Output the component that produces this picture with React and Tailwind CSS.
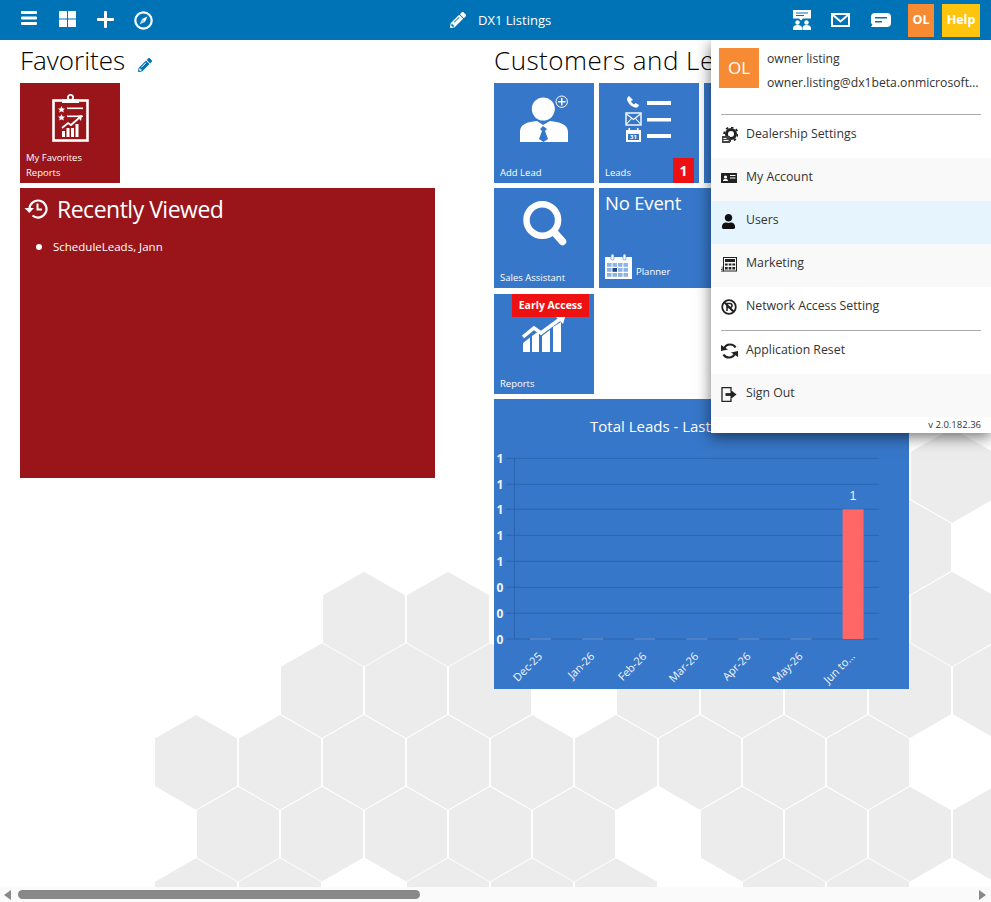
import React from "react";
import { FaPencilAlt, FaUser } from "react-icons/fa";

const hexRows = [
  { top: 428.3, xs: [952] },
  { top: 500, xs: [910] },
  { top: 571.7, xs: [364, 448, 952] },
  { top: 643.3, xs: [322, 406, 490, 658, 742, 826, 910, 994] },
  { top: 715, xs: [196, 280, 364, 448, 532, 616, 700, 784, 868] },
  { top: 786.7, xs: [238, 322, 406, 490, 574, 742, 826, 910, 994] },
  { top: 858.3, xs: [196, 280, 448, 532, 616, 784, 868] },
];

function HexBackground() {
  return (
    <svg className="absolute top-0 left-0" width="991" height="887">
      {hexRows.map((row) =>
        row.xs.map((x) => (
          <polygon
            key={row.top + "-" + x}
            fill="#ececec"
            points={`${x},${row.top} ${x + 41},${row.top + 23.5} ${x + 41},${row.top + 71} ${x},${row.top + 94.7} ${x - 41},${row.top + 71} ${x - 41},${row.top + 23.5}`}
          />
        ))
      )}
    </svg>
  );
}

function TopBar() {
  return (
    <header className="relative z-30 flex h-10 shrink-0 items-center bg-[#0073b7] text-white">
      <div className="flex w-[450px] pl-[10px]">
        <div className="flex w-[38px] justify-center">
          <svg width="16" height="14" viewBox="0 0 16 14" fill="white">
            <rect y="0" width="16" height="3" rx="1" />
            <rect y="5.5" width="16" height="3" rx="1" />
            <rect y="11" width="16" height="3" rx="1" />
          </svg>
        </div>
        <div className="flex w-[38px] justify-center">
          <svg width="17" height="16" viewBox="0 0 17 16" fill="white">
            <rect width="8" height="7.5" rx="0.5" />
            <rect x="9" width="8" height="7.5" rx="0.5" />
            <rect y="8.5" width="8" height="7.5" rx="0.5" />
            <rect x="9" y="8.5" width="8" height="7.5" rx="0.5" />
          </svg>
        </div>
        <div className="flex w-[38px] justify-center">
          <svg width="17" height="17" viewBox="0 0 17 17" fill="white">
            <rect x="7" width="3" height="17" rx="1" />
            <rect y="7" width="17" height="3" rx="1" />
          </svg>
        </div>
        <div className="flex w-[38px] justify-center">
          <svg width="19" height="19" viewBox="0 0 19 19" fill="none">
            <circle cx="9.5" cy="9.5" r="8.2" stroke="white" strokeWidth="2.2" />
            <polygon points="13.5,5.5 11,11 8,8" fill="white" />
            <polygon points="5.5,13.5 8,8 11,11" fill="white" opacity="0.75" />
          </svg>
        </div>
      </div>
      <div className="flex items-center gap-[12px]">
        <FaPencilAlt className="text-[16px]" />
        <span className="text-[13px] leading-none">DX1 Listings</span>
      </div>
      <div className="ml-auto flex items-center pr-[11px]">
        <div className="flex w-[40px] justify-center">
          <svg width="20" height="20" viewBox="0 0 20 20" fill="white">
            <path d="M1 0h18v8.5H11l-2 2-2-2H1z" />
            <rect x="4" y="2.5" width="12" height="1" fill="#0073b7" />
            <rect x="4" y="5" width="8" height="1" fill="#0073b7" />
            <circle cx="5.5" cy="12.5" r="2.2" />
            <path d="M1 20v-2c0-2 2-3 4.5-3s4.5 1 4.5 3v2z" />
            <circle cx="14.5" cy="12.5" r="2.2" />
            <path d="M10.5 20v-2c0-2 1.5-3 4-3s4.5 1 4.5 3v2z" />
          </svg>
        </div>
        <div className="flex w-[38px] justify-center">
          <svg width="19" height="14" viewBox="0 0 19 14" fill="none" stroke="white">
            <rect x="1" y="1" width="17" height="12" strokeWidth="2" />
            <path d="M2 2l7.5 6.5L17 2" strokeWidth="2" />
          </svg>
        </div>
        <div className="flex w-[42px] justify-center">
          <svg width="20" height="14" viewBox="0 0 20 14" fill="white">
            <path d="M4 0h12a4 4 0 0 1 4 4v6a4 4 0 0 1-4 4H0l1.5-2.5A4 4 0 0 1 0 10V4a4 4 0 0 1 4-4z" />
            <rect x="4" y="4" width="12" height="1.5" fill="#0073b7" />
            <rect x="4" y="8" width="7" height="1.5" fill="#0073b7" />
          </svg>
        </div>
        <div className="ml-[6.5px] flex h-[33px] w-[26px] items-center justify-center bg-[#f68b33] text-[12.5px] font-bold">OL</div>
        <div className="ml-[8px] flex h-[33px] w-[38px] items-center justify-center bg-[#ffc40d] text-[12.5px] font-bold">Help</div>
      </div>
    </header>
  );
}

function Tile({ color = "bg-[#3777c9]", label, top, children }) {
  return (
    <div className={`relative flex h-[100px] w-[100px] shrink-0 flex-col items-center text-white ${color}`} style={{ paddingTop: top }}>
      {children}
      <div className="mt-auto self-start px-[6px] pb-[3px] text-[9.5px]">{label}</div>
    </div>
  );
}

function ClipboardIcon() {
  return (
    <svg width="37" height="48" viewBox="0 0 37 48" fill="white">
      <rect x="1.5" y="6.5" width="34" height="40" fill="none" stroke="white" strokeWidth="2.6" />
      <circle cx="18.5" cy="3.5" r="2.6" fill="none" stroke="white" strokeWidth="1.8" />
      <rect x="10" y="5" width="17" height="4" />
      <polygon points="9.5,12 10.6,14.4 13,14.6 11.2,16.2 11.8,18.6 9.5,17.3 7.2,18.6 7.8,16.2 6,14.6 8.4,14.4" />
      <polygon points="9.5,20 10.6,22.4 13,22.6 11.2,24.2 11.8,26.6 9.5,25.3 7.2,26.6 7.8,24.2 6,22.6 8.4,22.4" />
      <rect x="15" y="13.5" width="16" height="1.6" />
      <rect x="15" y="21.5" width="16" height="1.6" />
      <path d="M10 34l6-5 3 2 8-7" fill="none" stroke="white" strokeWidth="1.8" />
      <polygon points="25,22 30,21 29,27" />
      <rect x="10" y="37" width="3" height="6" />
      <rect x="14.5" y="34" width="3" height="9" />
      <rect x="19" y="34" width="3" height="9" />
      <rect x="23.5" y="30" width="3" height="13" />
    </svg>
  );
}

function AddLeadIcon() {
  return (
    <svg width="50" height="48" viewBox="0 0 50 48" fill="white">
      <circle cx="24.3" cy="15" r="11.5" />
      <path d="M1 48V38c0-8 7-10 17-11l6 4 7-4c9 1 18 3 18 11v10z" />
      <polygon points="24,32 21,35 23,37 20,45 24.5,48 29,45 26,37 28,35" fill="#3777c9" />
      <circle cx="42.7" cy="7.7" r="7.2" fill="#3777c9" />
      <circle cx="42.7" cy="7.7" r="5.7" fill="none" stroke="white" strokeWidth="1" />
      <rect x="42" y="4" width="1.5" height="7.5" />
      <rect x="39" y="7" width="7.5" height="1.5" />
    </svg>
  );
}

function LeadsIcon() {
  return (
    <svg width="48" height="48" viewBox="0 0 48 48" fill="white">
      <path d="M4 1c-2 1-2.5 3-1.5 5 1.5 3.5 4 5.5 7.5 6.5 2 .5 3.500-.5 4-2.5l-3.500-2-1.500 1.500c-1.500-.8-2.500-2-3-3.500L8 5z" />
      <rect x="22" y="6" width="24" height="4" />
      <rect x="1" y="18" width="15" height="12" fill="none" stroke="white" strokeWidth="1.4" />
      <path d="M1.500 19l7 5.500 7-5.500M1.500 29l5-5.500M15.500 29l-5-5.500" fill="none" stroke="white" strokeWidth="1.1" />
      <rect x="22" y="23" width="24" height="3.500" />
      <rect x="1" y="35" width="15" height="12" />
      <rect x="3.500" y="33" width="1.500" height="3" />
      <rect x="12" y="33" width="1.500" height="3" />
      <rect x="3" y="39" width="11" height="6" fill="#3777c9" />
      <text x="8.500" y="44.300" fontSize="6" fontWeight="700" fill="white" textAnchor="middle">31</text>
      <rect x="22" y="39" width="24" height="4" />
    </svg>
  );
}

function SearchIcon() {
  return (
    <svg width="46" height="48" viewBox="0 0 46 48" fill="none" stroke="white">
      <circle cx="21.300" cy="21" r="15.800" strokeWidth="6.500" />
      <path d="M33 33l8.500 9.500" strokeWidth="7.500" strokeLinecap="round" />
    </svg>
  );
}

function CalendarIcon() {
  return (
    <svg width="27" height="25" viewBox="0 0 27 25" fill="white" className="shrink-0">
      <rect x="0" y="3" width="27" height="22" rx="0.5" />
      <rect x="6" y="0" width="3" height="6" rx="1.500" stroke="#3777c9" strokeWidth="0.6" />
      <rect x="18" y="0" width="3" height="6" rx="1.500" stroke="#3777c9" strokeWidth="0.6" />
      {[9, 14, 19].map((y) =>
        [2, 7.500, 13, 18.500].map((x) => (
          <rect key={x + "-" + y} x={x} y={y} width="4.500" height="3.800" fill={x === 7.500 && y === 14 ? "#23478f" : "#8db4e4"} />
        ))
      )}
    </svg>
  );
}

function ReportsIcon() {
  return (
    <svg width="45" height="38" viewBox="0 0 45 38" fill="white">
      <path d="M1 23l11-9 7 5L38 5" fill="none" stroke="white" strokeWidth="3.500" />
      <polygon points="33,2 44,0 41,10" />
      <polygon points="1,29 8,23.500 8,38 1,38" />
      <polygon points="10,22 17,17 17,38 10,38" />
      <polygon points="20,22 28,16 28,38 20,38" />
      <polygon points="31,13 39,8 39,38 31,38" />
    </svg>
  );
}

function LeadsChart() {
  const gridY = [458.300, 484.300, 509.300, 535.300, 561.300, 587.300, 613.300, 639];
  const yLabels = ["1", "1", "1", "1", "1", "0", "0", "0"];
  const months = ["Dec-25", "Jan-26", "Feb-26", "Mar-26", "Apr-26", "May-26", "Jun to..."];
  return (
    <div className="h-[290px] w-[415px] shrink-0 bg-[#3777c9] text-white">
      <div className="h-10 whitespace-nowrap pl-[96px] pt-[16px] text-[15px] leading-[22px]">Total Leads - Last 6 Months</div>
      <svg width="415" height="250" viewBox="494 439 415 250" className="block">
        {gridY.map((y, i) => (
          <g key={y}>
            <line x1="506" x2="879" y1={y} y2={y} stroke="#2b64ad" strokeWidth="1" />
            <text x="500" y={y + 4.500} fontSize="12" fontWeight="700" fill="#eef4fb" textAnchor="middle">{yLabels[i]}</text>
          </g>
        ))}
        <line x1="514.500" x2="514.500" y1="458" y2="639" stroke="#2b64ad" />
        {months.map((m, i) => {
          const left = 530 + i * 52.100;
          const last = i === months.length - 1;
          return (
            <g key={m}>
              {last ? (
                <rect x={left} y="509.300" width="21" height="129.700" fill="#ff6666" />
              ) : (
                <rect x={left} y="638.500" width="21" height="1" fill="#6d95cf" />
              )}
              <text
                x={left + 13}
                y="657"
                fontSize="11"
                fill="#f4f8fd"
                textAnchor="end"
                transform={`rotate(-45 ${left + 13} 657)`}
              >
                {m}
              </text>
            </g>
          );
        })}
        <text x="853" y="500" fontSize="12.500" fontFamily="Liberation Sans" fill="#eef4fb" textAnchor="middle">1</text>
      </svg>
    </div>
  );
}

function Content() {
  return (
    <main className="relative z-10 flex flex-1 pl-5">
      <div className="w-[415px] shrink-0">
        <div className="flex h-[43px] items-center gap-[13px]">
          <h1 className="pb-[4px] text-[26px] font-light leading-none text-black">Favorites</h1>
          <FaPencilAlt className="mt-[6px] text-[14px] text-[#0073b7]" />
        </div>
        <Tile color="bg-[#99151a]" top="11px" label={<span className="block leading-[15px]">My Favorites<br />Reports</span>}>
          <ClipboardIcon />
        </Tile>
        <div className="mt-[5px] h-[290px] bg-[#99151a] text-white">
          <div className="flex items-center gap-[9px] pl-[4px] pt-[6px]">
            <svg width="24" height="24" viewBox="0 0 24 24" fill="none" stroke="white">
              <path d="M5.500 12a8.500 8.500 0 1 1 3 6.500" strokeWidth="2.200" />
              <polygon points="0.500,11 10,11 5.300,16" fill="white" stroke="none" />
              <path d="M13.500 6.500v6h4.500" strokeWidth="2" />
            </svg>
            <span className="text-[23px] font-normal leading-[30px] tracking-[-0.5px]">Recently Viewed</span>
          </div>
          <ul className="mt-[15px] pl-[16px]">
            <li className="flex items-center gap-[11px] text-[11.500px] leading-4">
              <span className="h-[6px] w-[6px] rounded-full bg-white" />
              ScheduleLeads, Jann
            </li>
          </ul>
        </div>
      </div>
      <div className="ml-[59px] w-[415px] shrink-0">
        <div className="flex h-[43px] items-center">
          <h1 className="whitespace-nowrap pb-[4px] text-[26px] font-light leading-none tracking-[0.5px] text-black">Customers and Leads</h1>
        </div>
        <div className="flex flex-col gap-[5px]">
          <div className="flex gap-[5px]">
            <Tile top="11px" label="Add Lead"><AddLeadIcon /></Tile>
            <Tile top="12px" label="Leads">
              <LeadsIcon />
              <div className="absolute bottom-0 right-[5px] flex h-[25px] w-[21px] items-center justify-center bg-[#ee1111] text-[14px] font-bold">1</div>
            </Tile>
            <Tile top="0px" label="" />
          </div>
          <div className="flex gap-[5px]">
            <Tile top="11px" label="Sales Assistant"><SearchIcon /></Tile>
            <div className="flex h-[100px] w-[205px] shrink-0 flex-col bg-[#3777c9] px-[6px] pb-[9px] pt-[2px] text-white">
              <div className="text-[18.500px] font-normal leading-[26px] tracking-[-0.2px]">No Event</div>
              <div className="mt-auto flex items-end gap-[4px] text-[9.500px]">
                <CalendarIcon />
                <span>Planner</span>
              </div>
            </div>
          </div>
          <div className="mt-px">
            <Tile top="20px" label="Reports">
              <ReportsIcon />
              <div className="absolute left-[18px] top-0 flex h-[23px] w-[77px] items-center justify-center bg-[#ee1111] text-[10.500px] font-bold">Early Access</div>
            </Tile>
          </div>
          <LeadsChart />
        </div>
      </div>
    </main>
  );
}

function MenuItem({ icon, label, className = "bg-white" }) {
  return (
    <div className={`flex h-[43px] items-center pl-[10px] ${className}`}>
      <div className="flex w-[25px] shrink-0 items-center pb-[3px]">{icon}</div>
      <span className="pb-[4px] text-[12.300px] text-[#333]">{label}</span>
    </div>
  );
}

const iconColor = "#222";

const menuIcons = {
  settings: (
    <svg width="17" height="16" viewBox="0 0 17 16" fill="none">
      <circle cx="10" cy="7" r="4.500" stroke={iconColor} strokeWidth="3" />
      <circle cx="10" cy="7" r="6.800" stroke={iconColor} strokeWidth="1.800" strokeDasharray="2.500 2.800" />
      <rect x="1" y="9" width="8" height="7" fill="#444" />
      <rect x="2.500" y="11" width="3" height="1" fill="white" />
      <rect x="2.500" y="13" width="5" height="1" fill="white" />
    </svg>
  ),
  account: (
    <svg width="16" height="10" viewBox="0 0 16 10" fill={iconColor}>
      <rect width="16" height="10" rx="0.500" />
      <circle cx="4.500" cy="4" r="1.600" fill="white" />
      <path d="M2 8c0-1.500 1-2 2.500-2S7 6.500 7 8z" fill="white" />
      <rect x="9" y="2" width="5.500" height="1" fill="white" />
      <rect x="9" y="4.500" width="5.500" height="1" fill="white" />
    </svg>
  ),
  users: <FaUser className="text-[15px] text-[#111]" />,
  marketing: (
    <svg width="16" height="15" viewBox="0 0 16 15" fill={iconColor}>
      <rect x="2.500" y="0.500" width="13" height="13.500" fill="none" stroke={iconColor} />
      <rect x="4" y="2" width="10" height="3" />
      <rect x="4" y="6.500" width="2.700" height="2" />
      <rect x="7.700" y="6.500" width="2.700" height="2" />
      <rect x="11.400" y="6.500" width="2.700" height="2" />
      <rect x="4" y="10" width="2.700" height="2.500" />
      <rect x="7.700" y="10" width="2.700" height="2.500" />
      <rect x="11.400" y="10" width="2.700" height="2.500" />
      <path d="M0 12.500h2.500M0 15h2.500" stroke={iconColor} strokeWidth="0.800" />
      <rect x="1" y="10" width="0.800" height="5" fill="white" stroke={iconColor} strokeWidth="0.400" />
    </svg>
  ),
  network: (
    <svg width="16" height="16" viewBox="0 0 16 16" fill="none" stroke={iconColor}>
      <circle cx="8" cy="8" r="6.800" strokeWidth="1.800" />
      <path d="M3 3l10 10" strokeWidth="1.800" />
      <path d="M6 12V4.500h3a2 2 0 0 1 0 4H6M9 8.500l2 3.500" strokeWidth="1.500" />
    </svg>
  ),
  reset: (
    <svg width="17" height="16" viewBox="0 0 17 16" fill="none" stroke={iconColor}>
      <path d="M3 6C4 3 6.500 1.500 9 1.500c2.500 0 4.500 1 5.500 3" strokeWidth="2.200" />
      <polygon points="0,2 7,6.500 0,8" fill={iconColor} stroke="none" />
      <path d="M14 10c-1 3-3.500 4.500-6 4.500-2.500 0-4.500-1-5.500-3" strokeWidth="2.200" />
      <polygon points="17,14 10,9.500 17,8" fill={iconColor} stroke="none" />
    </svg>
  ),
  signOut: (
    <svg width="16" height="15" viewBox="0 0 16 15" fill="none" stroke={iconColor}>
      <path d="M10 3.500V.7H1v13.600h9v-2.500" strokeWidth="1.300" />
      <path d="M4.500 7.500h6" strokeWidth="2.800" />
      <polygon points="9.500,2.800 15.500,7.500 9.500,12.200" fill={iconColor} stroke="none" />
    </svg>
  ),
};

function UserMenu() {
  return (
    <div className="absolute right-0 top-10 z-20 h-[393px] w-[280px] bg-white shadow-[0_4px_14px_rgba(0,0,0,0.55)]">
      <div className="flex h-[74px] pl-[8px] pt-[8px]">
        <div className="flex h-10 w-10 shrink-0 items-center justify-center bg-[#f68b33] text-[17px] font-normal text-white">OL</div>
        <div className="ml-[8px] w-[213px] text-[12.200px] leading-[24px] text-[#333]">
          <div className="-mt-[1px]">owner listing</div>
          <div className="truncate">owner.listing@dx1beta.onmicrosoft.com</div>
        </div>
      </div>
      <div className="mx-[10px] h-px bg-[#aaa]" />
      <MenuItem icon={menuIcons.settings} label="Dealership Settings" />
      <MenuItem icon={menuIcons.account} label="My Account" className="bg-[#f9f9f9]" />
      <MenuItem icon={menuIcons.users} label="Users" className="bg-[#e6f5fd]" />
      <MenuItem icon={menuIcons.marketing} label="Marketing" className="bg-[#f9f9f9]" />
      <MenuItem icon={menuIcons.network} label="Network Access Setting" />
      <div className="mx-[10px] h-px bg-[#aaa]" />
      <MenuItem icon={menuIcons.reset} label="Application Reset" />
      <MenuItem icon={menuIcons.signOut} label="Sign Out" className="bg-[#f9f9f9]" />
      <div className="pr-[10px] text-right text-[9.500px] leading-[15px] text-[#333]">v 2.0.182.36</div>
    </div>
  );
}

function ScrollBar() {
  return (
    <div className="relative z-10 flex h-[15px] shrink-0 items-center bg-[#fafafa] pl-[4px] pr-[4px]">
      <svg width="8" height="10" viewBox="0 0 8 10" fill="#888">
        <polygon points="7,0 7,10 0,5" />
      </svg>
      <div className="ml-[6px] h-[9px] w-[402px] rounded-full bg-[#888]" />
      <svg width="8" height="10" viewBox="0 0 8 10" fill="#888" className="ml-auto">
        <polygon points="0,0 0,10 7,5" />
      </svg>
    </div>
  );
}

export default function App() {
  return (
    <div className="relative flex h-[902px] w-[991px] flex-col overflow-hidden bg-white font-['Open_Sans',sans-serif]">
      <HexBackground />
      <TopBar />
      <Content />
      <UserMenu />
      <ScrollBar />
    </div>
  );
}
